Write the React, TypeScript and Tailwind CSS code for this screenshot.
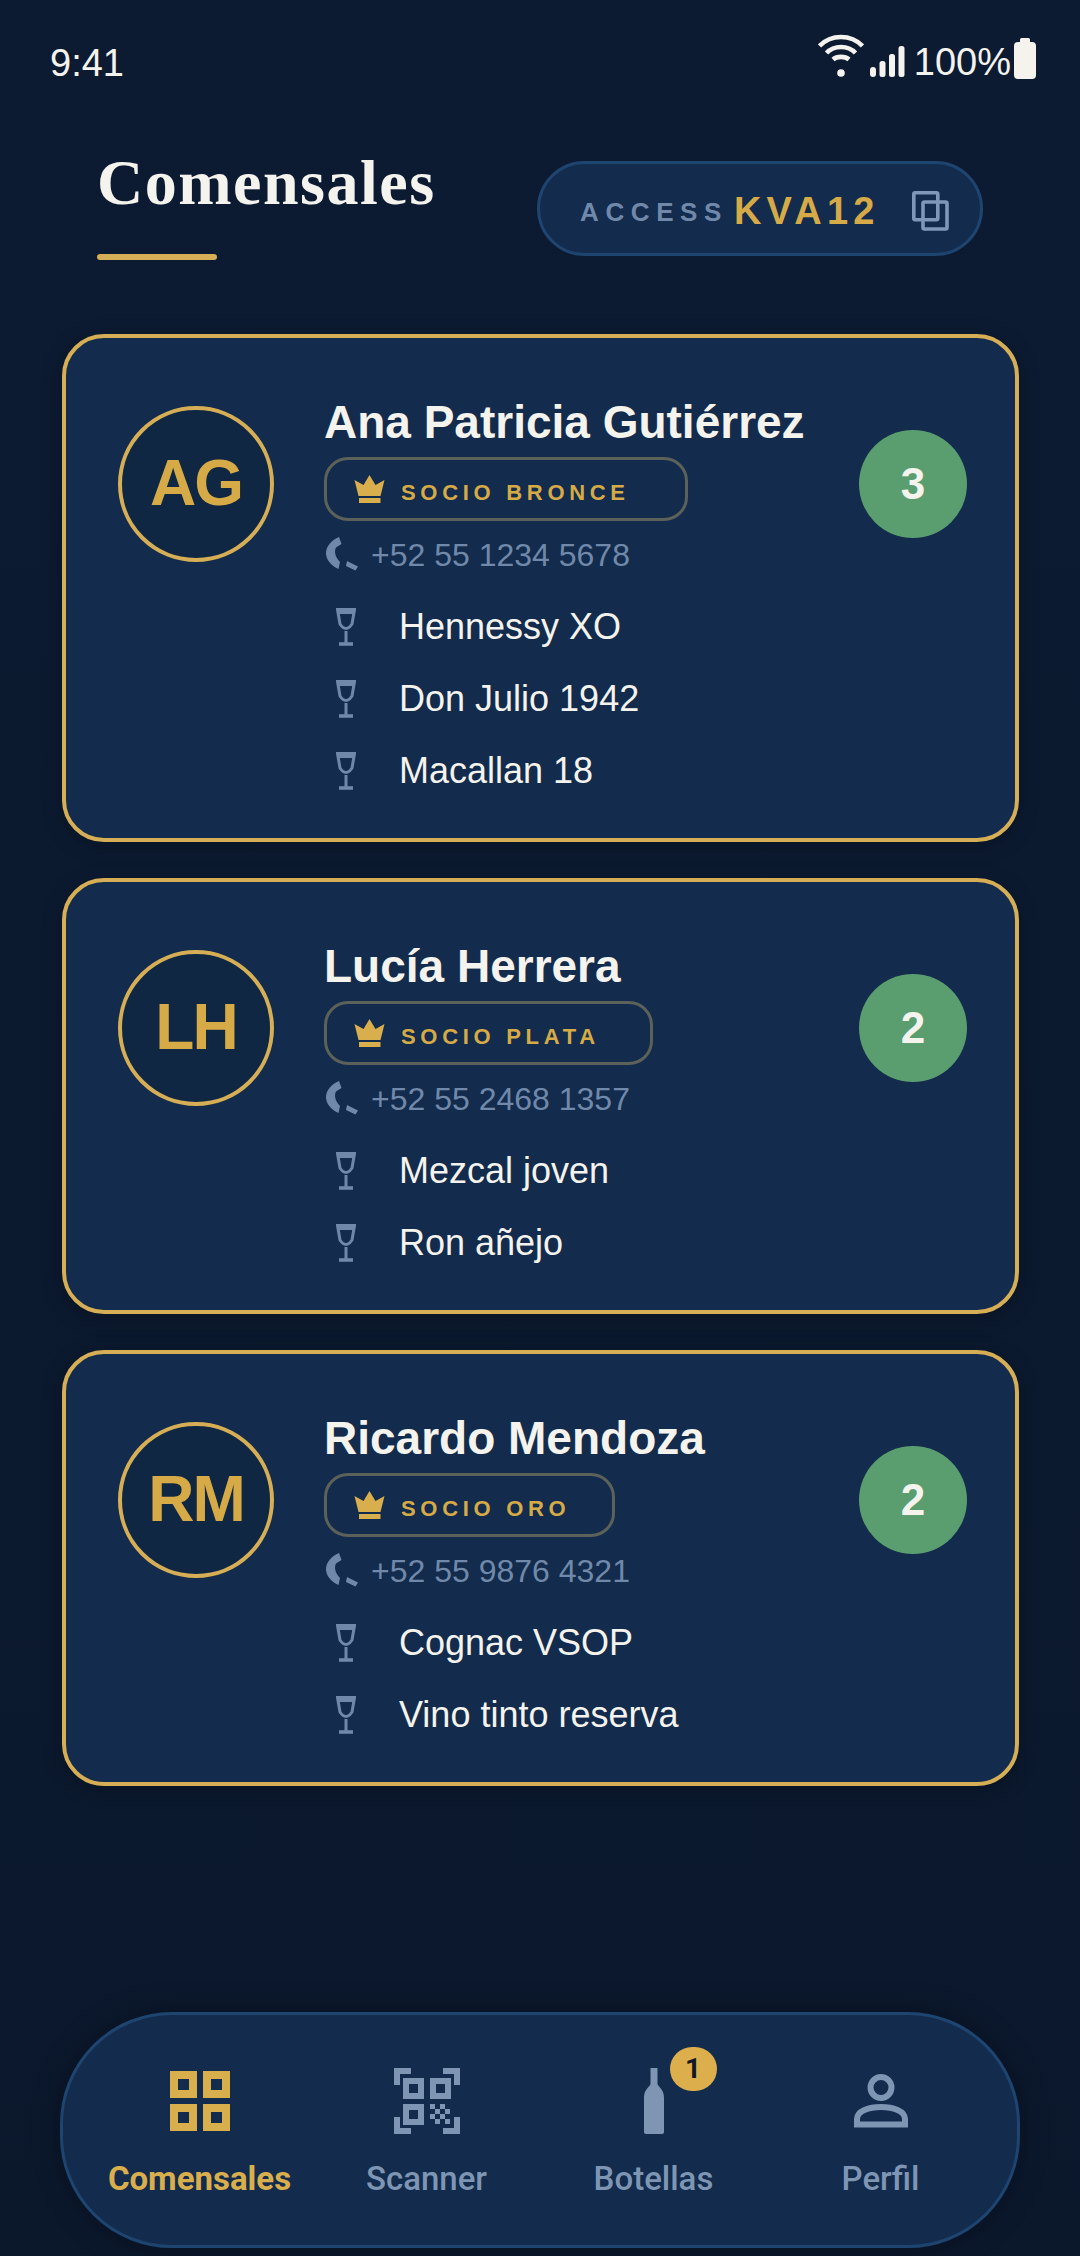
import React from "react";

const Wifi = () => (
  <svg width="46" height="46" viewBox="0 0 46 46" fill="none" stroke="#f5f3ee" strokeWidth="4.6" className="block">
    <path d="M1.5 14 C13 2 33 2 44.5 14" />
    <path d="M8.5 21 C16 13 30 13 37.5 21" />
    <path d="M15 27.5 C19 24 27 24 31 27.5" />
    <circle cx="23" cy="41" r="3.8" fill="#f5f3ee" stroke="none" />
  </svg>
);

const Signal = () => (
  <svg width="35" height="31" viewBox="0 0 35 31" fill="#f5f3ee" className="block">
    <rect x="0" y="21" width="6" height="10" rx="3" />
    <rect x="9.5" y="15" width="6" height="16" rx="2.5" />
    <rect x="19" y="8" width="6" height="23" rx="2.5" />
    <rect x="28.5" y="0" width="6" height="31" rx="2.5" />
  </svg>
);

const Battery = () => (
  <svg width="22" height="41" viewBox="0 0 22 41" fill="#f5f3ee" className="block">
    <rect x="6" y="0" width="10" height="6" rx="1.5" />
    <rect x="0" y="4" width="22" height="37" rx="4" />
  </svg>
);

const Copy = () => (
  <svg width="37" height="40" viewBox="0 0 37 40" fill="none" stroke="#7f97b8" strokeWidth="3.6" className="block">
    <rect x="1.8" y="1.8" width="24" height="27" rx="1.5" />
    <rect x="11" y="11" width="24" height="27" rx="1.5" />
  </svg>
);

const Crown = () => (
  <svg width="31" height="28" viewBox="0 0 31 28" fill="#d9ae4c" className="block">
    <path d="M15.5 0 L21.5 10 L30.5 5 L26.5 21 L4.5 21 L0.5 5 L9.5 10 Z" />
    <rect x="5" y="23" width="21.5" height="5" />
  </svg>
);

const Phone = () => (
  <svg width="34" height="36" viewBox="0 0 34 36" fill="#7089aa" className="block">
    <path d="M13 0 L15.5 7 L10 10.5 C8 14 9 20 14 25 L12.5 32 C4 28 0 22 0 16 C0 9 6 3 13 0 Z" />
    <path d="M21 24 L32 29.5 L29.5 33.5 L20 29 Z" />
  </svg>
);

const Glass = () => (
  <svg width="20" height="38" viewBox="0 0 20 38" fill="none" stroke="#7089aa" strokeWidth="3" className="block">
    <path d="M1.5 1.5 H18.5 L16 16 Q10 25 4 16 Z" />
    <path d="M1 3.5 H19" strokeWidth="5" />
    <path d="M10 23 V35" />
    <path d="M3 36 H17" strokeWidth="3.6" />
  </svg>
);

const GridIcon = () => (
  <svg width="60" height="60" viewBox="0 0 60 60" fill="none" stroke="#d9ae4c" strokeWidth="8" className="block">
    <rect x="4" y="4" width="19" height="19" />
    <rect x="37" y="4" width="19" height="19" />
    <rect x="4" y="37" width="19" height="19" />
    <rect x="37" y="37" width="19" height="19" />
  </svg>
);

const ScanIcon = () => (
  <svg width="66" height="66" viewBox="0 0 66 66" className="block">
    <g fill="none" stroke="#7e96b4" strokeWidth="6">
      <path d="M17 3 H3 V17" />
      <path d="M49 3 H63 V17" />
      <path d="M3 49 V63 H17" />
      <path d="M63 49 V63 H49" />
      <rect x="12" y="13" width="15" height="15" />
      <rect x="39" y="13" width="15" height="15" />
      <rect x="12" y="39" width="15" height="15" />
    </g>
    <g fill="#7e96b4">
      <rect x="36" y="36" width="5" height="5" />
      <rect x="46" y="36" width="5" height="5" />
      <rect x="41" y="41" width="5" height="5" />
      <rect x="51" y="41" width="5" height="5" />
      <rect x="36" y="46" width="5" height="5" />
      <rect x="46" y="46" width="5" height="5" />
      <rect x="41" y="51" width="5" height="5" />
      <rect x="51" y="51" width="5" height="5" />
    </g>
  </svg>
);

const BottleIcon = () => (
  <svg width="20" height="66" viewBox="0 0 20 66" fill="#7e96b4" className="block">
    <path d="M6.5 0 H13.5 V16 C15 20 20 21 20 30 V64 Q20 66 18 66 H2 Q0 66 0 64 V30 C0 21 5 20 6.5 16 Z" />
  </svg>
);

const UserIcon = () => (
  <svg width="54" height="54" viewBox="0 0 54 54" fill="none" stroke="#7e96b4" strokeWidth="6" className="block">
    <circle cx="27" cy="13.5" r="10.5" />
    <path d="M3 50.5 V45 C3 37 15 33 27 33 C39 33 51 37 51 45 V50.5 Z" />
  </svg>
);

type Guest = { initials: string; name: string; tier: string; pill: string; phone: string; count: number; drinks: string[] };

const guests: Guest[] = [
  { initials: "AG", name: "Ana Patricia Gutiérrez", tier: "SOCIO BRONCE", pill: "w-[364px]", phone: "+52 55 1234 5678", count: 3, drinks: ["Hennessy XO", "Don Julio 1942", "Macallan 18"] },
  { initials: "LH", name: "Lucía Herrera", tier: "SOCIO PLATA", pill: "w-[329px]", phone: "+52 55 2468 1357", count: 2, drinks: ["Mezcal joven", "Ron añejo"] },
  { initials: "RM", name: "Ricardo Mendoza", tier: "SOCIO ORO", pill: "w-[291px]", phone: "+52 55 9876 4321", count: 2, drinks: ["Cognac VSOP", "Vino tinto reserva"] },
];

function Card({ g }: { g: Guest }) {
  return (
    <div className="flex rounded-[42px] border-[4px] border-[#d6ae55] bg-[#132b4c] pl-[52px] pr-[48px] pt-[58px] pb-[31px] shadow-[0_4px_20px_rgba(0,0,0,0.25)]">
      <div className="mt-[10px] flex h-[156px] w-[156px] shrink-0 items-center justify-center rounded-full border-[4px] border-[#d6ae55] bg-[#102743] pb-[3px] text-[64px] font-bold tracking-[-2px] text-[#d6ab47]">
        {g.initials}
      </div>
      <div className="ml-[50px] min-w-0 flex-1">
        <div className="text-[46px] leading-[52px] font-bold text-[#f5f3ee]">{g.name}</div>
        <div className={`mt-[9px] flex h-[64px] items-center gap-[16px] rounded-[24px] border-[3px] border-[#5c6159] pl-[27px] ${g.pill}`}>
          <Crown />
          <span className="pt-[6px] text-[22px] font-bold tracking-[4.7px] text-[#d6ab47]">{g.tier}</span>
        </div>
        <div className="mt-[14px] flex h-[40px] items-center gap-[11px] pl-[2px] text-[32px] text-[#7089aa]">
          <Phone />
          <span>{g.phone}</span>
        </div>
        <div className="mt-[16px]">
          {g.drinks.map((d) => (
            <div key={d} className="flex h-[72px] items-center pl-[12px] text-[36px] text-[#f5f3ee]">
              <Glass />
              <span className="ml-[43px]">{d}</span>
            </div>
          ))}
        </div>
      </div>
      <div className="mt-[34px] flex h-[108px] w-[108px] shrink-0 items-center justify-center self-start rounded-full bg-[#5a9e6f] text-[44px] font-bold text-[#f5f3ee]">
        {g.count}
      </div>
    </div>
  );
}

function NavItem({ label, active, children }: { label: string; active?: boolean; children: React.ReactNode }) {
  return (
    <div className="flex flex-col items-center pt-[6px]">
      <div className="relative flex h-[68px] items-center justify-center">{children}</div>
      <div className={`mt-[24px] font-['Roboto'] text-[33px] leading-[40px] ${active ? "font-bold text-[#d9ae4c]" : "font-medium text-[#7e96b4]"}`}>{label}</div>
    </div>
  );
}

export default function App() {
  return (
    <div className="flex h-[2256px] w-[1080px] flex-col overflow-hidden bg-gradient-to-b from-[#0c1b32] to-[#0b182c] font-['Liberation_Sans',Arial,sans-serif]">
      <div className="flex h-[100px] items-start justify-between pl-[50px] pr-[44px] text-[38px] text-[#f5f3ee]">
        <span className="mt-[41px] leading-[44px]">9:41</span>
        <div className="mt-[32px] flex items-end">
          <Wifi />
          <div className="ml-[6px] mb-[1px]"><Signal /></div>
          <span className="ml-[9px] leading-[44px] -mb-[6px]">100%</span>
          <div className="ml-[3px] -mb-[1px]"><Battery /></div>
        </div>
      </div>

      <div className="mt-[50px] flex items-start justify-between px-[97px]">
        <div>
          <div className="font-['Liberation_Serif',serif] text-[64px] tracking-[1.5px] leading-[66px] font-bold text-[#f5f3ee]">Comensales</div>
          <div className="mt-[38px] h-[6px] w-[120px] rounded-full bg-[#d6ae55]" />
        </div>
        <div className="mt-[11px] flex h-[95px] w-[446px] items-center rounded-full border-[3px] border-[#1e4470] bg-[#132b4c] pl-[40px]">
          <span className="pt-[8px] text-[26px] font-bold tracking-[6.6px] text-[#7089aa]">ACCESS</span>
          <span className="ml-[6px] pt-[6px] text-[38px] font-bold tracking-[5.2px] text-[#d6ab47]">KVA12</span>
          <div className="ml-[32px] mt-[4px]"><Copy /></div>
        </div>
      </div>

      <div className="mt-[74px] flex flex-col gap-[36px] pl-[62px] pr-[61px]">
        {guests.map((g) => (
          <Card key={g.initials} g={g} />
        ))}
      </div>

      <div className="mx-[60px] mt-auto mb-[8px] grid h-[236px] grid-cols-4 items-center rounded-[112px] border-[3px] border-[#1e4470] bg-[#132b4c] px-[23px] shadow-[0_0_30px_rgba(0,0,0,0.3)]">
        <NavItem label="Comensales" active><GridIcon /></NavItem>
        <NavItem label="Scanner"><ScanIcon /></NavItem>
        <NavItem label="Botellas">
          <BottleIcon />
          <div className="absolute -top-[20px] left-[26px] flex h-[44px] w-[47px] items-center justify-center rounded-full bg-[#dcae4c] font-['Roboto'] text-[28px] font-bold text-[#111827]">1</div>
        </NavItem>
        <NavItem label="Perfil"><UserIcon /></NavItem>
      </div>
    </div>
  );
}
